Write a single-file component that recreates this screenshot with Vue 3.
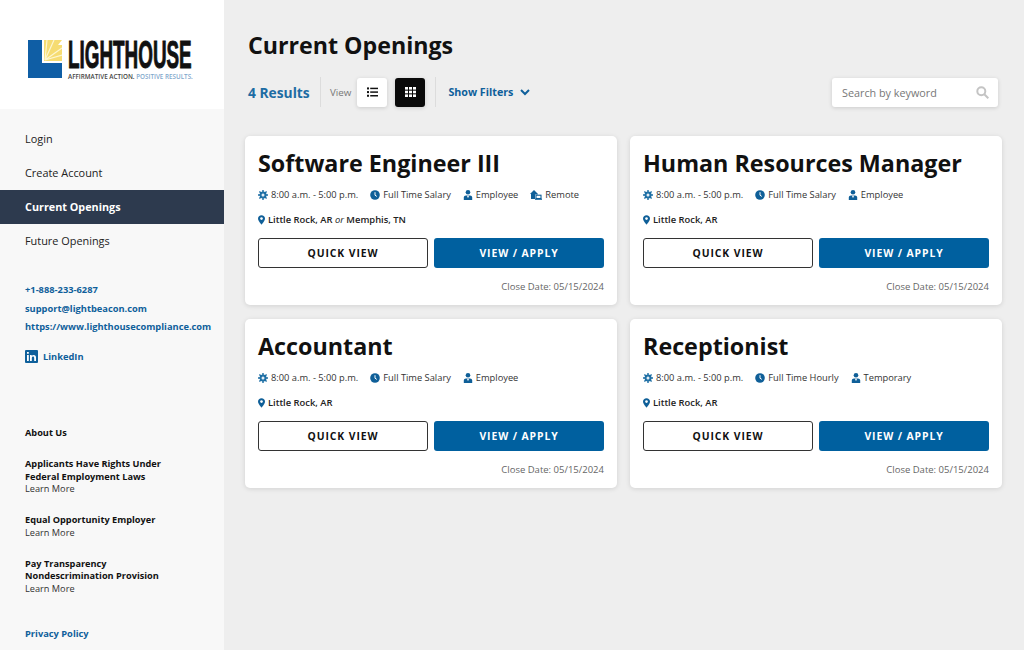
<script setup>
const jobs = [
  { title: 'Software Engineer III', pay: 'Full Time Salary', type: 'Employee', remote: true, places: ['Little Rock, AR', 'Memphis, TN'] },
  { title: 'Human Resources Manager', pay: 'Full Time Salary', type: 'Employee', remote: false, places: ['Little Rock, AR'] },
  { title: 'Accountant', pay: 'Full Time Salary', type: 'Employee', remote: false, places: ['Little Rock, AR'] },
  { title: 'Receptionist', pay: 'Full Time Hourly', type: 'Temporary', remote: false, places: ['Little Rock, AR'] }
]
const navItems = ['Login', 'Create Account', 'Current Openings', 'Future Openings']
</script>

<template>
  <div class="page">
    <aside class="sidebar">
      <div class="logo-wrap">
        <div class="logo">
          <svg class="logo-mark" width="34" height="38" viewBox="0 0 34 38">
            <path d="M16 0H34L30 5L34 5V21H16Z" fill="#f6dc72" />
            <path d="M17 20L19 0M17 20L26 0M17 20L34 8M17 20L34 15" stroke="#fdf6d0" stroke-width="1.200" />
            <path d="M0 0H14V23H34V38H0Z" fill="#0f5ea5" />
          </svg>
          <div class="logo-text">
            <div class="logo-name"><span>LIGHTHOUSE</span></div>
            <div class="logo-sub">AFFIRMATIVE ACTION. <span>POSITIVE RESULTS.</span></div>
          </div>
        </div>
      </div>

      <nav class="nav">
        <a v-for="item in navItems" :key="item" class="nav-item" :class="{ active: item === 'Current Openings' }">{{ item }}</a>
      </nav>

      <div class="contact">
        <a>+1-888-233-6287</a>
        <a>support@lightbeacon.com</a>
        <a>https://www.lighthousecompliance.com</a>
        <a class="linkedin">
          <svg width="13" height="13" viewBox="0 0 13 13">
            <rect width="13" height="13" rx="1" fill="#0f609b" />
            <path d="M2 5h1.800v6H2zM2 2h1.800v1.800H2zM5 5h1.700v.9C7.100 5.300 7.800 4.900 8.600 4.900 10.300 4.900 11 5.900 11 7.600V11H9.200V8c0-.9-.3-1.500-1.100-1.500S6.800 7.100 6.800 8v3H5z" fill="#fff" />
          </svg>
          LinkedIn
        </a>
      </div>

      <div class="about">
        <div class="about-head">About Us</div>
        <div class="about-item">
          <strong>Applicants Have Rights Under<br />Federal Employment Laws</strong>
          <span>Learn More</span>
        </div>
        <div class="about-item">
          <strong>Equal Opportunity Employer</strong>
          <span>Learn More</span>
        </div>
        <div class="about-item">
          <strong>Pay Transparency<br />Nondescrimination Provision</strong>
          <span>Learn More</span>
        </div>
      </div>

      <a class="privacy">Privacy Policy</a>
    </aside>

    <main class="main">
      <h1>Current Openings</h1>

      <div class="toolbar">
        <span class="results">4 Results</span>
        <span class="divider"></span>
        <span class="view-label">View</span>
        <button class="view-btn">
          <svg width="11" height="10" viewBox="0 0 12 10" fill="#111">
            <rect x="0" y="0" width="2.200" height="2.200" /><rect x="3.500" y="0.300" width="8.500" height="1.600" />
            <rect x="0" y="4" width="2.200" height="2.200" /><rect x="3.500" y="4.300" width="8.500" height="1.600" />
            <rect x="0" y="8" width="2.200" height="2.200" /><rect x="3.500" y="8.300" width="8.500" height="1.600" />
          </svg>
        </button>
        <button class="view-btn dark">
          <svg width="11" height="10" viewBox="0 0 11 10" fill="#fff">
            <rect x="0" y="0" width="3" height="2.600" /><rect x="4" y="0" width="3" height="2.600" /><rect x="8" y="0" width="3" height="2.600" />
            <rect x="0" y="3.700" width="3" height="2.600" /><rect x="4" y="3.700" width="3" height="2.600" /><rect x="8" y="3.700" width="3" height="2.600" />
            <rect x="0" y="7.400" width="3" height="2.600" /><rect x="4" y="7.400" width="3" height="2.600" /><rect x="8" y="7.400" width="3" height="2.600" />
          </svg>
        </button>
        <span class="divider second"></span>
        <a class="filters">
          Show Filters
          <svg width="10" height="7" viewBox="0 0 10 7" fill="none" stroke="#0f609b" stroke-width="2">
            <path d="M1 1l4 4 4-4" />
          </svg>
        </a>
        <div class="search">
          <span>Search by keyword</span>
          <svg width="13" height="13" viewBox="0 0 13 13" fill="none" stroke="#c4c4c4" stroke-width="2">
            <circle cx="5.300" cy="5.300" r="4" /><path d="M8.300 8.300l4 4" />
          </svg>
        </div>
      </div>

      <div class="grid">
        <section v-for="job in jobs" :key="job.title" class="card">
          <h2>{{ job.title }}</h2>
          <div class="meta">
            <span class="tag">
              <svg width="10" height="10" viewBox="0 0 10 10">
                <path d="M5 0v10M0 5h10M1.400 1.400l7.200 7.200M8.600 1.400l-7.200 7.200" stroke="#1c6ea4" stroke-width="1.400" />
                <circle cx="5" cy="5" r="2.900" fill="none" stroke="#1c6ea4" stroke-width="1.300" />
                <circle cx="5" cy="5" r="1.500" fill="#e4eef5" />
              </svg>
              8:00 a.m. - 5:00 p.m.
            </span>
            <span class="tag">
              <svg width="10" height="10" viewBox="0 0 10 10">
                <circle cx="5" cy="5" r="4.800" fill="#0f5f98" />
                <path d="M5 2.200v3l1.800 1.200" fill="none" stroke="#fff" stroke-width="1" />
              </svg>
              {{ job.pay }}
            </span>
            <span class="tag">
              <svg width="10" height="10" viewBox="0 0 10 10" fill="#0f5f98">
                <circle cx="5" cy="2.300" r="2.300" />
                <path d="M.8 10V7.400C.8 6.200 1.800 5.400 3 5.400h4c1.200 0 2.200.8 2.200 2V10z" />
                <path d="M4.500 5.400h1l.3 1.400-.8 1.200-.8-1.200z" fill="#fff" />
              </svg>
              {{ job.type }}
            </span>
            <span v-if="job.remote" class="tag">
              <svg width="12" height="10" viewBox="0 0 12 10" fill="#0f5f98">
                <path d="M0 4L4 0l4 4v.500H5V9H1V4z" />
                <rect x="6" y="5.200" width="5" height="3.300" fill="none" stroke="#0f5f98" stroke-width="1.100" />
                <rect x="5" y="8.700" width="7" height="1.100" />
              </svg>
              Remote
            </span>
          </div>
          <div class="place">
            <svg width="7" height="10" viewBox="0 0 8 11">
              <path d="M4 0C1.800 0 0 1.700 0 3.900 0 6.500 4 11 4 11s4-4.500 4-7.100C8 1.700 6.200 0 4 0z" fill="#0f5f98" />
              <circle cx="4" cy="3.900" r="1.500" fill="#fff" />
            </svg>
            <span>
              <template v-for="(place, i) in job.places" :key="place">
                <em v-if="i > 0"> or </em>{{ place }}
              </template>
            </span>
          </div>
          <div class="actions">
            <button class="btn outline">QUICK VIEW</button>
            <button class="btn solid">VIEW / APPLY</button>
          </div>
          <div class="close-date">Close Date: 05/15/2024</div>
        </section>
      </div>
    </main>
  </div>
</template>

<style>
html, body { margin: 0; background: #eeeeee; }
</style>

<style scoped>
* { box-sizing: border-box; }
.page {
  display: flex;
  width: 1024px;
  height: 650px;
  overflow: hidden;
  font-family: "Open Sans", "Noto Sans", sans-serif;
  color: #111;
  background: #eeeeee;
}
.sidebar {
  width: 224px;
  flex: none;
  display: flex;
  flex-direction: column;
  background: #f8f8f8;
}
.logo-wrap {
  height: 109px;
  background: #fff;
  padding: 40px 0 0 28px;
}
.logo {
  display: flex;
  gap: 6px;
}
.logo-mark { flex: none; }
.logo-text { width: 130px; }
.logo-name {
  height: 29px;
  line-height: 29px;
  font-family: "Liberation Sans", sans-serif;
  font-size: 38.500px;
  font-weight: 700;
  color: #111;
  white-space: nowrap;
}
.logo-name span {
  display: inline-block;
  transform-origin: left center;
  transform: scaleX(.49);
  -webkit-text-stroke: 1px #111;
}
.logo-sub {
  margin-top: 4px;
  font-size: 6.300px;
  line-height: 8px;
  font-weight: 600;
  color: #444;
  white-space: nowrap;
}
.logo-sub span { color: #7fa8cc; }
.nav {
  display: flex;
  flex-direction: column;
  margin-top: 13px;
}
.nav-item {
  height: 34px;
  line-height: 34px;
  padding-left: 25px;
  font-size: 10.900px;
  color: #222;
}
.nav-item.active {
  background: #2d3a4e;
  color: #fff;
  font-size: 10.800px;
  font-weight: 700;
}
.contact {
  display: flex;
  flex-direction: column;
  gap: 3.700px;
  margin-top: 24px;
  padding-left: 25px;
  font-size: 9.300px;
  line-height: 15px;
  font-weight: 700;
  color: #0f609b;
  white-space: nowrap;
}
.linkedin {
  display: flex;
  align-items: center;
  gap: 5px;
  margin-top: 10.500px;
}
.about {
  margin-top: 63.500px;
  padding-left: 25px;
  font-size: 9.200px;
  line-height: 12.500px;
}
.about-head {
  font-weight: 700;
  margin-bottom: 18.500px;
}
.about-item {
  display: flex;
  flex-direction: column;
  margin-bottom: 18.500px;
}
.about-item strong { font-weight: 700; }
.about-item span { color: #333; }
.privacy {
  margin-top: 13.500px;
  padding-left: 25px;
  font-size: 9.300px;
  line-height: 13px;
  font-weight: 700;
  color: #0f609b;
}
.main {
  flex: 1;
  min-width: 0;
  padding: 30px 21px 0 21px;
}
h1 {
  margin: 0 0 0 3px;
  font-size: 23.200px;
  line-height: 31px;
  font-weight: 700;
  color: #111;
}
.toolbar {
  display: flex;
  align-items: center;
  height: 30px;
  margin: 16px 0 0 3px;
}
.results {
  width: 62px;
  font-size: 13.800px;
  font-weight: 700;
  white-space: nowrap;
  color: #1d6ca3;
}
.divider {
  width: 1px;
  height: 30px;
  margin: 0 9px 0 10px;
  background: #dcdcdc;
}
.divider.second { margin: 0 12px 0 10px; }
.view-label {
  font-size: 9.800px;
  color: #777;
  margin-right: 6px;
}
.view-btn {
  width: 30px;
  height: 29px;
  margin-right: 8px;
  padding: 0;
  display: flex;
  align-items: center;
  justify-content: center;
  border: 0;
  border-radius: 3px;
  background: #fff;
  box-shadow: 0 1px 4px rgba(0, 0, 0, .15);
}
.view-btn.dark {
  margin-right: 0;
  background: #0a0a0a;
}
.filters {
  display: flex;
  align-items: center;
  gap: 7px;
  font-size: 10.700px;
  font-weight: 700;
  color: #0f609b;
}
.search {
  width: 166px;
  height: 29px;
  margin-left: auto;
  margin-right: 5px;
  padding: 0 9px 0 10px;
  display: flex;
  align-items: center;
  justify-content: space-between;
  background: #fff;
  border-radius: 3px;
  box-shadow: 0 1px 4px rgba(0, 0, 0, .15);
  font-size: 10.800px;
  color: #777;
}
.grid {
  display: grid;
  grid-template-columns: 372px 372px;
  gap: 14px 13px;
  margin-top: 29px;
}
.card {
  height: 169px;
  padding: 11px 13px 0;
  background: #fff;
  border-radius: 5px;
  box-shadow: 0 1px 5px rgba(0, 0, 0, .12);
}
h2 {
  margin: 0;
  font-size: 23.300px;
  line-height: 32px;
  font-weight: 700;
  color: #111;
  white-space: nowrap;
}
.meta {
  display: flex;
  gap: 12px;
  margin-top: 8px;
  font-size: 9.300px;
  line-height: 16px;
  color: #333;
}
.tag {
  display: flex;
  align-items: center;
  gap: 3px;
}
.place {
  display: flex;
  align-items: center;
  gap: 3px;
  margin-top: 8.500px;
  font-size: 9.400px;
  line-height: 16px;
  font-weight: 600;
  color: #222;
}
.place em {
  font-weight: 400;
}
.actions {
  display: flex;
  gap: 6px;
  margin-top: 10.500px;
}
.btn {
  width: 170px;
  height: 30px;
  padding: 0;
  border-radius: 3px;
  font-family: inherit;
  font-size: 10.400px;
  font-weight: 700;
  letter-spacing: .9px;
}
.btn.outline {
  background: #fff;
  border: 1px solid #333;
  color: #111;
}
.btn.solid {
  background: #00609f;
  border: 0;
  color: #fff;
}
.close-date {
  margin-top: 11px;
  text-align: right;
  font-size: 9.500px;
  line-height: 16px;
  color: #666;
}
</style>
